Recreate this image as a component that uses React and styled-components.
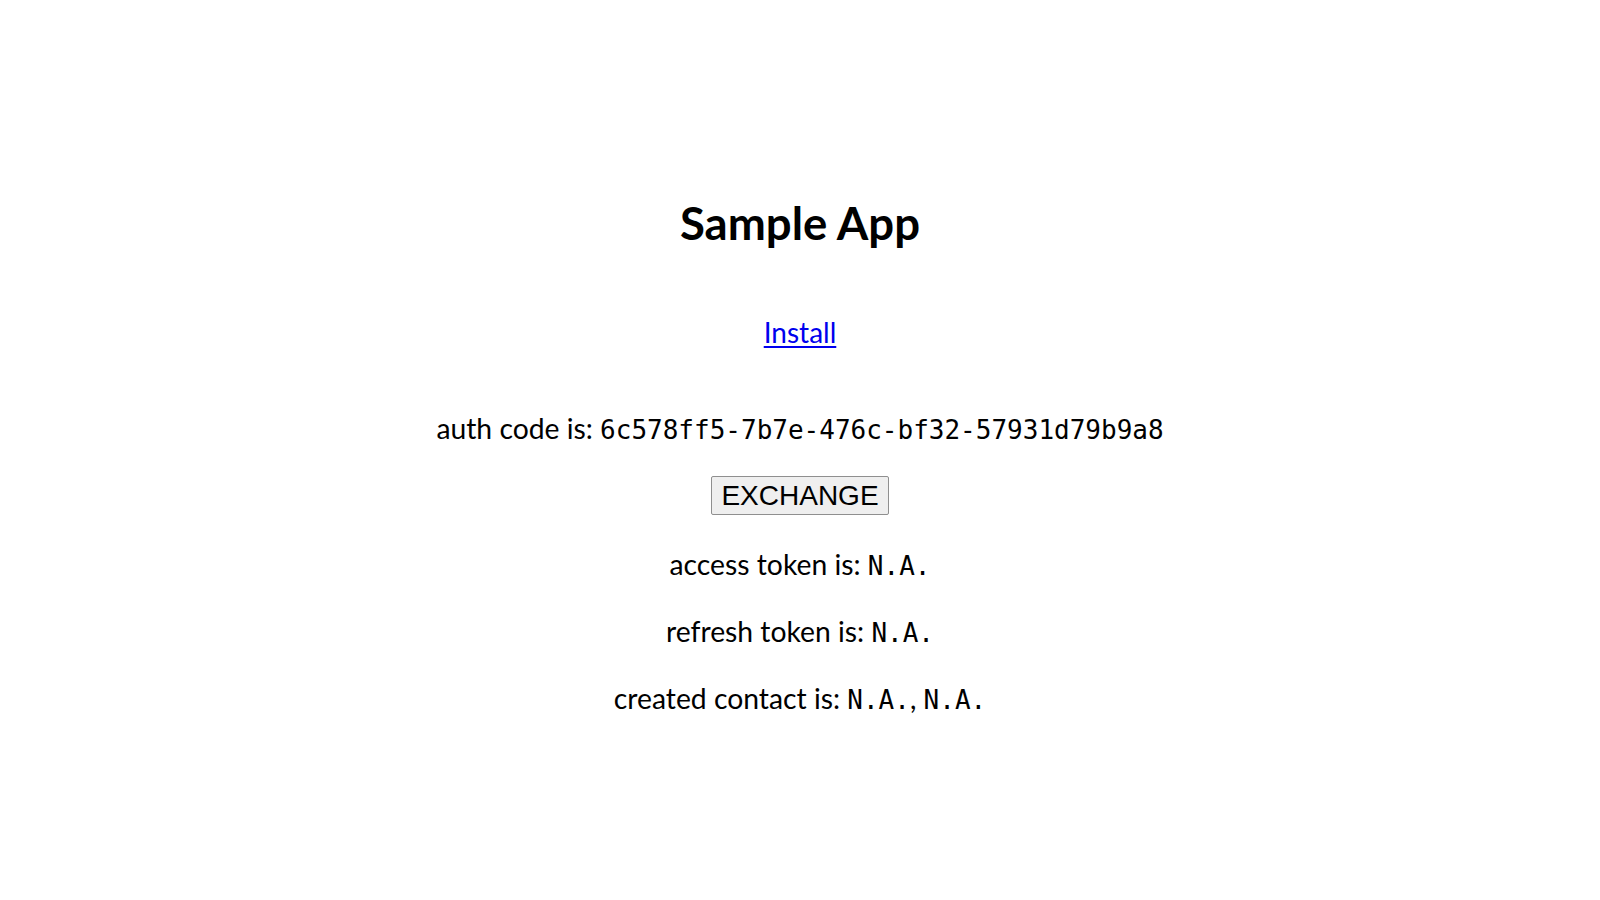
import React from "react";
import styled, { createGlobalStyle } from "styled-components";

const Global = createGlobalStyle`
  html, body { margin: 0; padding: 0; background: #fff; }
  body { font-family: Lato, "Noto Sans", sans-serif; color: #000; }
`;

const Page = styled.main`
  display: flex;
  flex-direction: column;
  align-items: center;
  padding-top: 196px;
  text-align: center;
`;

const Title = styled.h1`
  margin: 0 0 66px;
  font-family: Lato, sans-serif;
  font-weight: 700;
  font-size: 45.5px;
  line-height: 54px;
`;

const InstallLink = styled.a`
  display: block;
  margin: -1px 0 61px;
  font-size: 28px;
  line-height: 34px;
  color: #0000ee;
  text-decoration: underline;
  text-underline-offset: 3px;
`;

const Line = styled.p`
  margin: 0 0 ${(p) => p.$gap}px;
  font-size: 28.3px;
  line-height: 36px;
  height: 36px;
  white-space: nowrap;
`;

const Code = styled.code`
  font-family: "DejaVu Sans Mono", "Liberation Mono", monospace;
  font-size: 26px;
  line-height: 1;
`;

const Button = styled.button`
  margin: 0 0 31px;
  height: 39px;
  padding: 0 9px;
  font-family: "Liberation Sans", Arial, sans-serif;
  font-size: 28px;
  line-height: 37px;
  color: #000;
  background: #efefef;
  border: 1px solid #8f8f8f;
  border-radius: 2px;
  cursor: pointer;
`;

export default function App() {
  return (
    <>
      <Global />
      <Page>
        <Title>Sample App</Title>
        <InstallLink href="#">Install</InstallLink>
        <Line $gap={30}>
          auth code is: <Code>6c578ff5-7b7e-476c-bf32-57931d79b9a8</Code>
        </Line>
        <Button type="button">EXCHANGE</Button>
        <Line $gap={31}>
          access token is: <Code>N.A.</Code>
        </Line>
        <Line $gap={31}>
          refresh token is: <Code>N.A.</Code>
        </Line>
        <Line $gap={0}>
          created contact is: <Code>N.A.</Code>, <Code>N.A.</Code>
        </Line>
      </Page>
    </>
  );
}
